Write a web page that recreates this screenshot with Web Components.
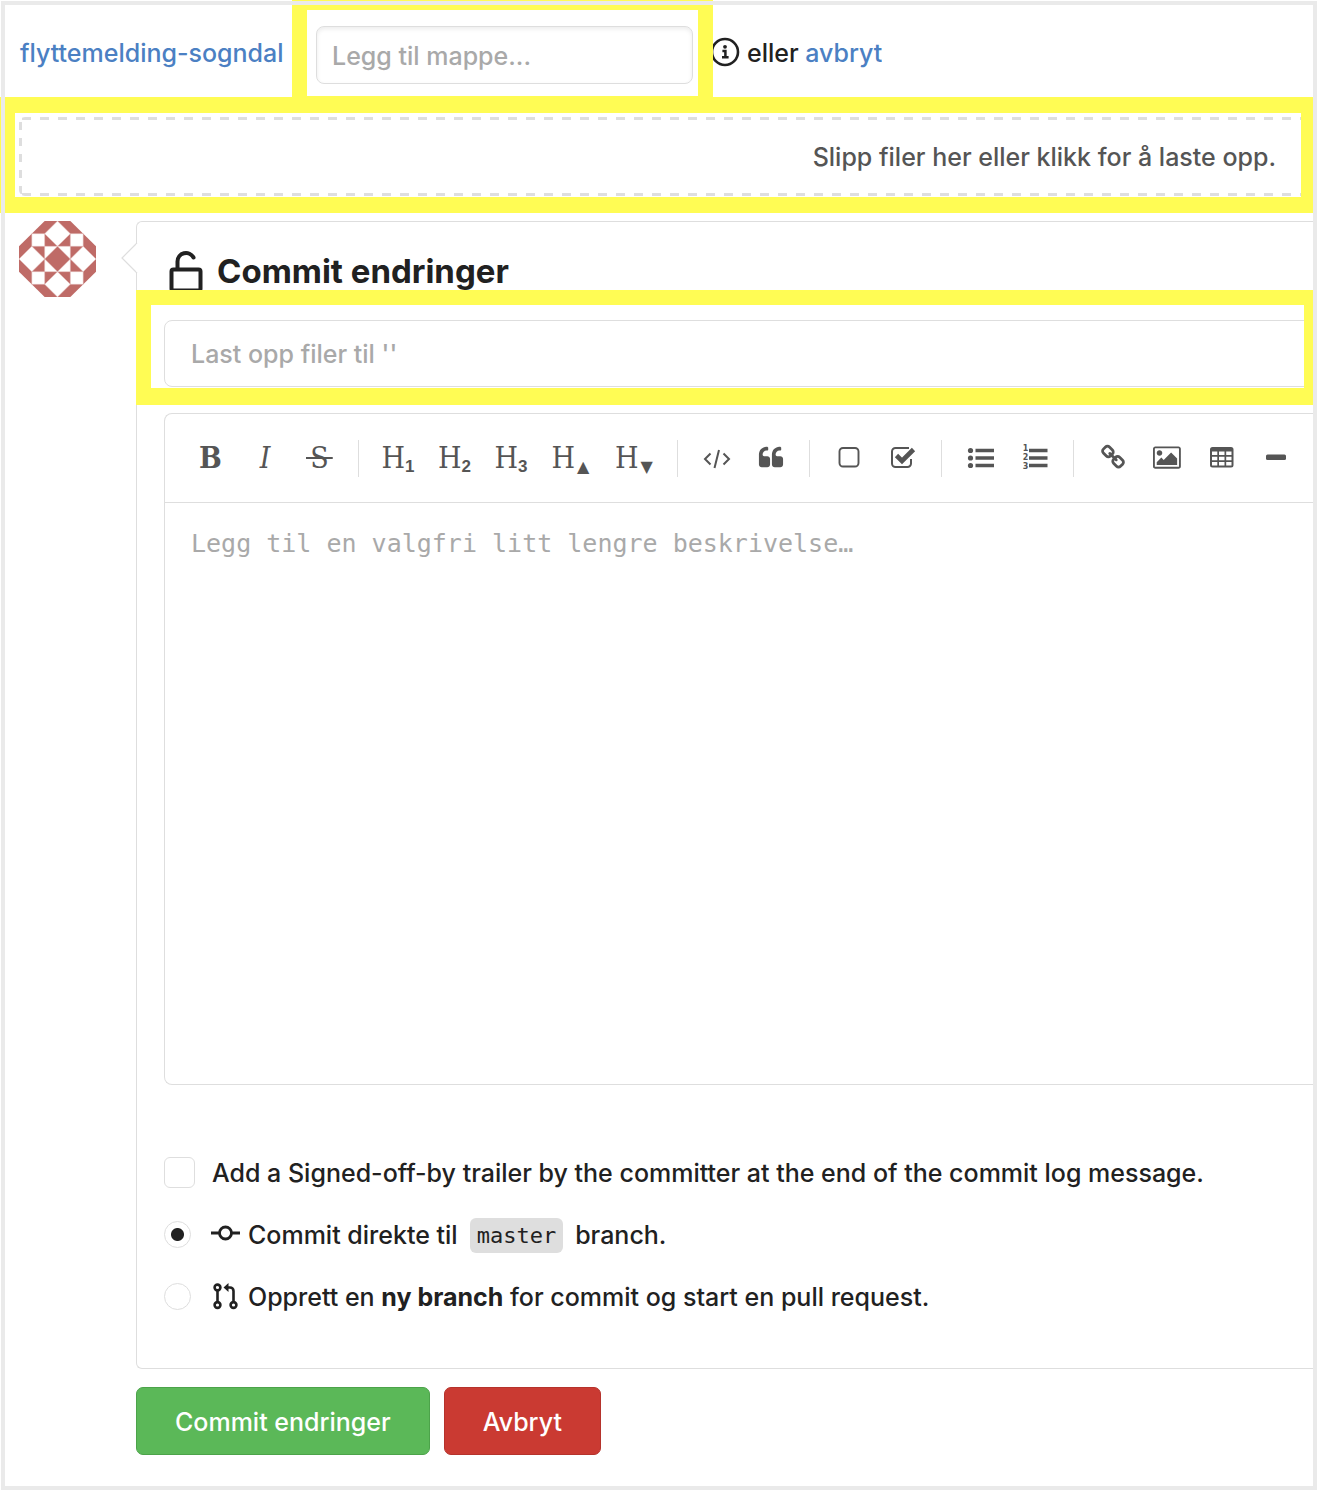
<!DOCTYPE html>
<html lang="nb">
<head>
<meta charset="utf-8">
<title>Last opp filer</title>
<style>
  html, body { margin: 0; background: #fff; }
  body { font: 500 25px/36px Inter, "Liberation Sans", sans-serif; color: #212121; }
</style>
</head>
<body>
<upload-page></upload-page>
<script>
const define = (name, html) => customElements.define(name, class extends HTMLElement {
  constructor() {
    super();
    this.attachShadow({ mode: 'open' }).innerHTML = html;
  }
});

const BASE = `*, *::before { box-sizing: border-box; } a { color: #4b80c3; text-decoration: none; }
  svg { display: block; flex: none; }`;

/* Yellow marker drawn round whatever is slotted into it */
define('marker-box', `<style>${BASE}
  :host { display: block; box-sizing: border-box; border: 15px solid #fffc54; overflow: hidden; }
</style><slot></slot>`);

define('path-bar', `<style>${BASE}
  :host { display: flex; align-items: stretch; height: 97px; padding-left: 20px; }
  .crumb, .after { display: flex; align-items: center; padding-top: 8px; }
  .crumb { flex: 0 0 272px; }
  marker-box { flex: 0 0 421px; border-top-width: 10px; border-bottom-width: 1px; padding: 16px 5px 0 9px; }
  input { display: block; width: 100%; height: 58px; padding: 2px 15px 0; font: inherit; color: inherit;
    border: 1px solid #dedede; border-radius: 8px; background: #fff; box-shadow: inset 0 2px 4px #00000014; outline: none; }
  input::placeholder { color: #a9a9a9; opacity: 1; }
  .after { gap: 7px; overflow: hidden; }
  .after svg { margin-left: -3px; overflow: visible; }
</style>
<div class="crumb"><a href="#">flyttemelding-sogndal</a></div>
<marker-box><input type="text" aria-label="Mappe" placeholder="Legg til mappe..."></marker-box>
<div class="after">
  <svg width="30" height="30" viewBox="0 0 30 30" fill="none" stroke="#212121"><circle cx="15" cy="14" r="13" stroke-width="2.6"/><path d="M12.400 13h3v6M12 19.300h6.600" stroke-width="2.500"/><circle cx="15" cy="8.800" r="1.900" fill="#212121" stroke="none"/></svg>
  <span>eller <a href="#">avbryt</a></span>
</div>`);

define('drop-zone', `<style>${BASE}
  :host { display: block; --h: repeating-linear-gradient(90deg, #dedede 0 9px, #fff 9px 18px);
    --v: repeating-linear-gradient(#dedede 0 8px, #fff 8px 16px); }
  marker-box { height: 116px; border-width: 16px 12px 16px 15px; padding: 4px 0 0 4px; }
  button { display: flex; align-items: center; justify-content: flex-end; width: 100%; height: 79px;
    padding: 0 25px 0 0; font: inherit; color: #555; border: 0; border-radius: 6px 0 0 6px;
    background: var(--h) 3px 0 / 100% 3px no-repeat, var(--h) 3px 100% / 100% 3px no-repeat, var(--v) 0 5px / 3px 100% no-repeat; }
</style>
<marker-box><button type="button">Slipp filer her eller klikk for å laste opp.</button></marker-box>`);

define('user-avatar', `<style>:host { display: block; } svg { display: block; }</style>
<svg width="77" height="76" viewBox="0 0 6 6" preserveAspectRatio="none" role="img" aria-label="Avatar">
  <path d="M2 0h2l2 2v2l-2 2H2L0 4V2z" fill="#bf6b67"/>
  <path d="M3 0l1 1-1 1-1-1zM3 4l1 1-1 1-1-1zM1 2l1 1-1 1-1-1zM5 2l1 1-1 1-1-1zM1 1h1v1H1zM4 1h1v1H4zM1 4h1v1H1zM4 4h1v1H4zM2 2h1L2 3zM4 2v1L3 2zM2 4V3l1 1zM4 4H3l1-1z" fill="#fff" stroke="#e3bdbb" stroke-width=".04"/>
</svg>`);

const fa = (w, d) => `<svg width="${w}" height="28" viewBox="0 0 ${w} 28" fill="#555">${d}</svg>`;
const TOOLS = [
  ['Fet', '<b>B</b>', 55], ['Kursiv', '<i>I</i>', 54], ['Gjennomstreket', '<s>S</s>', 55], null,
  ['Overskrift 1', 'H<sub>1</sub>', 56], ['Overskrift 2', 'H<sub>2</sub>', 57], ['Overskrift 3', 'H<sub>3</sub>', 56],
  ['Større overskrift', 'H<sub class="tri">▲</sub>', 63], ['Mindre overskrift', 'H<sub class="tri">▼</sub>', 64], null,
  ['Kode', fa(28, '<path d="M7.500 9.500L2 15l5.500 5.500M20.500 9.500L26 15l-5.500 5.500M16 6l-4.500 18" fill="none" stroke="#555" stroke-width="2"/>'), 55],
  ['Sitat', fa(28, '<path transform="translate(1 1) scale(.0145)" d="M832 960v384q0 80-56 136t-136 56h-384q-80 0-136-56t-56-136v-704q0-104 40.500-198.500t109.500-163.500 163.500-109.500 198.500-40.500h64q26 0 45 19t19 45v128q0 26-19 45t-45 19h-64q-106 0-181 75t-75 181v32q0 40 28 68t68 28h224q80 0 136 56t56 136zm896 0v384q0 80-56 136t-136 56h-384q-80 0-136-56t-56-136v-704q0-104 40.500-198.500t109.500-163.500 163.500-109.500 198.500-40.500h64q26 0 45 19t19 45v128q0 26-19 45t-45 19h-64q-106 0-181 75t-75 181v32q0 40 28 68t68 28h224q80 0 136 56t56 136z"/>'), 54], null,
  ['Tom avkrysning', fa(28, '<rect x="4.500" y="4" width="19" height="18.500" rx="3.500" fill="none" stroke="#555" stroke-width="1.900"/>'), 55],
  ['Avkrysning', fa(28, '<path d="M20 4H6.500A3.500 3.500 0 0 0 3 7.500v12A3.500 3.500 0 0 0 6.500 23h12a3.500 3.500 0 0 0 3.500-3.500V15" fill="none" stroke="#555" stroke-width="2"/><path d="M7.500 11.500l5.500 5.500L24.500 5.500" fill="none" stroke="#555" stroke-width="4.600"/>'), 54], null,
  ['Punktliste', fa(28, '<circle cx="3.500" cy="6.500" r="2.600"/><circle cx="3.500" cy="14" r="2.600"/><circle cx="3.500" cy="21.500" r="2.600"/><path d="M8.500 4.700h18.500v3.600H8.500zM8.500 12.200h18.500v3.600H8.500zM8.500 19.700h18.500v3.600H8.500z"/>'), 55],
  ['Nummerert liste', '<span class="nums" aria-hidden="true"><span>1</span><span>2</span><span>3</span></span>' + fa(19, '<path d="M0 4.700h18.500v3.600H0zM0 12.200h18.500v3.600H0zM0 19.700h18.500v3.600H0z"/>'), 54], null,
  ['Lenke', fa(28, '<path transform="translate(1 .6) scale(.0145)" d="M1520 1216q0-40-28-68l-208-208q-28-28-68-28-42 0-72 32 3 3 19 18.500t21.500 21.500 15 19 13 25.500 3.500 27.500q0 40-28 68t-68 28q-15 0-27.500-3.500t-25.500-13-19-15-21.500-21.500-18.500-19q-33 31-33 73 0 40 28 68l206 207q27 27 68 27 40 0 68-26l147-146q28-28 28-67zm-703-705q0-40-28-68l-206-207q-28-28-68-28-39 0-68 27l-147 146q-28 28-28 67 0 40 28 68l208 208q27 27 68 27 42 0 72-31-3-3-19-18.500t-21.500-21.500-15-19-13-25.500-3.500-27.500q0-40 28-68t68-28q15 0 27.500 3.500t25.500 13 19 15 21.500 21.500 18.500 19q33-31 33-73zm895 705q0 120-85 203l-147 146q-83 83-203 83-121 0-204-85l-206-207q-83-83-83-203 0-123 88-209l-88-88q-86 88-208 88-120 0-204-84l-208-208q-84-84-84-204t85-203l147-146q83-83 203-83 121 0 204 85l206 207q83 83 83 203 0 123-88 209l88 88q86-88 208-88 120 0 204 84l208 208q84 84 84 204z"/>'), 55],
  ['Bilde', fa(28, '<path transform="translate(0 .6) scale(.0145)" d="M640 576q0 80-56 136t-136 56-136-56-56-136 56-136 136-56 136 56 56 136zm1024 384v448h-1408v-192l320-320 160 160 512-512zm96-704h-1600q-13 0-22.500 9.500t-9.500 22.500v1216q0 13 9.500 22.500t22.500 9.500h1600q13 0 22.500-9.500t9.500-22.500v-1216q0-13-9.500-22.500t-22.500-9.500zm160 32v1216q0 66-47 113t-113 47h-1600q-66 0-113-47t-47-113v-1216q0-66 47-113t113-47h1600q66 0 113 47t47 113z"/>'), 54],
  ['Tabell', fa(28, '<path fill-rule="evenodd" d="M4.500 3h18.500a2.500 2.500 0 0 1 2.500 2.500v15.500a2.500 2.500 0 0 1-2.500 2.500h-18.500a2.500 2.500 0 0 1-2.500-2.500v-15.500A2.500 2.500 0 0 1 4.500 3zM4 7.500v3.500h5.300V7.500zm7 0v3.500h5.500V7.500zm7.200 0v3.500h5.300V7.500zM4 12.700v3.500h5.300v-3.500zm7 0v3.500h5.500v-3.500zm7.200 0v3.500h5.300v-3.500zM4 18v3.500h5.300V18zm7 0v3.500h5.500V18zm7.200 0v3.500h5.300V18z"/>'), 55],
  ['Vannrett linje', fa(28, '<rect x="4" y="10.500" width="20" height="5.500" rx="1.500"/>'), 54]
];

define('editor-toolbar', `<style>${BASE}
  :host { display: flex; align-items: center; height: 89px; padding-left: 18px; border-bottom: 1px solid #dedede; color: #555; overflow: hidden; }
  button { display: flex; flex: none; align-items: center; justify-content: center; height: 48px; padding: 0; border: 0; background: none;
    font: 30px/36px "DejaVu Serif Condensed", "Liberation Serif", serif; color: inherit; }
  s { display: block; padding: 0 4px; text-decoration: none; background: linear-gradient(#555, #555) center / 100% 2px no-repeat; }
  sub { align-self: flex-end; font: bold 17px/20px "Liberation Sans", sans-serif; margin-bottom: 5px; }
  sub.tri { font: 16px/20px "DejaVu Sans", sans-serif; margin-left: 2px; }
  hr { flex: none; width: 1px; height: 37px; margin: 0 11px; border: 0; background: #dedede; }
  .nums { display: flex; flex-direction: column; gap: 1px; font: bold 8px/8px "DejaVu Sans", sans-serif; width: 7px; }
</style>` + TOOLS.map(t => t
  ? `<button type="button" aria-label="${t[0]}" style="width:${t[2]}px">${t[1]}</button>`
  : '<hr>').join(''));

define('markdown-editor', `<style>${BASE}
  :host { display: block; border: 1px solid #dedede; border-right: 0; border-radius: 8px 0 0 8px; }
  textarea { display: block; width: 100%; height: 581px; padding: 23px 26px; border: 0; resize: none; outline: none; background: none;
    font: 25px/36px "DejaVu Sans Mono", monospace; color: inherit; }
  textarea::placeholder { color: #a9a9a9; opacity: 1; }
</style>
<editor-toolbar></editor-toolbar>
<textarea aria-label="Beskrivelse" placeholder="Legg til en valgfri litt lengre beskrivelse…"></textarea>`);

define('commit-options', `<style>${BASE}
  :host { display: flex; flex-direction: column; gap: 24px; }
  label { display: flex; align-items: center; height: 38px; white-space: pre; }
  .text { display: flex; align-items: center; padding-top: 2px; }
  input { appearance: none; flex: none; margin: 0; background: #fff; border: 1px solid #dedede; }
  input[type=checkbox] { width: 31px; height: 31px; border-radius: 6px; margin-right: 17px; }
  input[type=radio] { width: 27px; height: 27px; border-radius: 50%; margin-right: 20px; }
  input[type=radio]:checked { background: radial-gradient(circle, #212121 6px, #fff 7px); }
  svg { margin-right: 8px; }
  code { font: 22px/35px "DejaVu Sans Mono", monospace; background: #dedede; border-radius: 6px; padding: 0 7px; margin: 0 12px; }
  b { font-weight: 700; }
</style>
<label><input type="checkbox"><span class="text">Add a Signed-off-by trailer by the committer at the end of the commit log message.</span></label>
<label><input type="radio" name="mode" checked><span class="text"><svg width="29" height="28" viewBox="0 0 29 28" fill="none" stroke="#212121" stroke-width="2.800"><circle cx="14.500" cy="12" r="6"/><path d="M0 12h8.500M20.500 12H29"/></svg><span>Commit direkte til</span><code>master</code><span>branch.</span></span></label>
<label><input type="radio" name="mode"><span class="text"><svg width="29" height="28" viewBox="0 0 29 28" fill="none" stroke="#212121" stroke-width="2.600"><circle cx="6.500" cy="4.500" r="2.900"/><circle cx="6.500" cy="22" r="2.900"/><circle cx="22.500" cy="22" r="2.900"/><path d="M6.500 7.500v12M22.500 19.500V8a3.500 3.500 0 0 0-3.500-3.500h-4"/><path d="M17.500 0v9l-5-4.500z" fill="#212121" stroke="none"/></svg><span>Opprett en <b>ny branch</b> for commit og start en pull request.</span></span></label>`);

define('commit-panel', `<style>${BASE}
  :host { position: relative; display: block; border: 1px solid #dedede; border-right: 0; border-radius: 6px 0 0 6px; }
  .arrow { position: absolute; left: -16px; top: 20px; }
  h3 { display: flex; align-items: flex-end; gap: 14px; height: 68px; margin: 0; padding-left: 32px; font: 700 33px/38px Inter, sans-serif; }
  marker-box { margin-left: -1px; height: 115px; border-width: 15px 9px 17px 15px; padding: 15px 0 0 13px; }
  input { display: block; width: calc(100% + 10px); height: 67px; padding: 0 26px; font: inherit; color: inherit;
    border: 1px solid #dedede; border-radius: 8px; background: #fff; outline: none; }
  input::placeholder { color: #a9a9a9; opacity: 1; }
  markdown-editor { margin: 8px 0 0 27px; }
  commit-options { margin: 68px 0 53px 27px; }
</style>
<svg class="arrow" width="17" height="32" viewBox="0 0 17 32"><path d="M16 1L1 16l15 15" fill="#fff" stroke="#dedede" stroke-width="1.200"/><path d="M16.300 2v28" stroke="#fff" stroke-width="1.600"/></svg>
<h3><svg width="34" height="40" viewBox="0 0 34 40" fill="none" stroke="#212121" stroke-width="4"><rect x="2.500" y="19.500" width="29" height="21" rx="2"/><path d="M8.500 19v-7.500a8.500 8.500 0 0 1 16-4" stroke-linecap="round"/></svg>Commit endringer</h3>
<marker-box><input type="text" aria-label="Commit-melding" placeholder="Last opp filer til ''"></marker-box>
<markdown-editor></markdown-editor>
<commit-options></commit-options>`);

define('action-button', `<style>${BASE}
  :host { display: block; }
  button { height: 68px; padding: 2px 38px 0; font: inherit; color: #fff; background: var(--fill);
    border: 1px solid var(--edge); border-radius: 7px; }
</style><button type="button"><slot></slot></button>`);

define('upload-page', `<style>${BASE}
  :host { position: relative; display: block; overflow: hidden; padding: 0 4px 35px 0; }
  .frame { position: absolute; inset: 1px 0 0 1px; border: 4px solid #eaeaea; pointer-events: none; }
  .row { display: flex; gap: 40px; padding: 8px 0 0 19px; }
  user-avatar { flex: none; }
  commit-panel { flex: 1; min-width: 0; }
  .actions { display: flex; gap: 14px; padding: 18px 0 0 136px; }
  .ok { --fill: #5bb858; --edge: #4ca34a; }
  .stop { --fill: #ca3a32; --edge: #b5332c; }
</style>
<path-bar></path-bar>
<drop-zone></drop-zone>
<div class="row"><user-avatar></user-avatar><commit-panel></commit-panel></div>
<div class="actions"><action-button class="ok">Commit endringer</action-button><action-button class="stop">Avbryt</action-button></div>
<div class="frame"></div>`);
</script>
</body>
</html>
